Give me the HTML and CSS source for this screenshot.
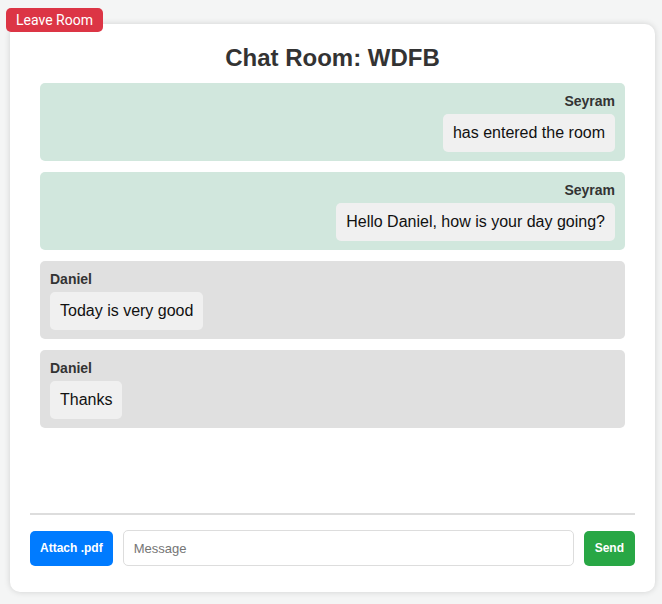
FILE: index.html
```html
<!DOCTYPE html>
<html>
<head>
<meta charset="utf-8">
<link rel="stylesheet" href="styles.css">
</head>
<body>
<button class="leave">Leave Room</button>
<div class="card">
  <h2 class="title">Chat Room: WDFB</h2>
  <div class="messages">
    <div class="msg mine">
      <div class="name">Seyram</div>
      <div class="bubble">has entered the room</div>
    </div>
    <div class="msg mine">
      <div class="name">Seyram</div>
      <div class="bubble">Hello Daniel, how is your day going?</div>
    </div>
    <div class="msg other">
      <div class="name">Daniel</div>
      <div class="bubble">Today is very good</div>
    </div>
    <div class="msg other">
      <div class="name">Daniel</div>
      <div class="bubble">Thanks</div>
    </div>
  </div>
  <form class="composer">
    <button type="button" class="btn attach">Attach .pdf</button>
    <input class="input" type="text" placeholder="Message">
    <button type="button" class="btn send">Send</button>
  </form>
</div>
</body>
</html>
```
FILE: styles.css
```css
* { box-sizing: border-box; }
html, body { margin: 0; padding: 0; }
body {
  background: #f4f5f5;
  font-family: "Liberation Sans", Arial, sans-serif;
  padding: 24px 7px 12px 10px;
  min-height: 604px;
}
.leave {
  position: absolute;
  top: 8px;
  left: 6px;
  height: 24px;
  padding: 0 10px;
  background: #dc3545;
  color: #fff;
  border: none;
  border-radius: 5px;
  font-family: Roboto, sans-serif;
  font-size: 14px;
  font-weight: 400;
}
.card {
  background: #fff;
  border-radius: 10px;
  box-shadow: 0 0 6px rgba(0,0,0,0.15);
  padding: 20px 20px 20px 20px;
  height: 568px;
  display: flex;
  flex-direction: column;
}
.title {
  margin: 0 0 11px;
  font-size: 24px;
  line-height: 28px;
  text-align: center;
  color: #333;
  font-weight: bold;
}
.messages {
  height: 420px;
  margin: 0 0 10px;
  padding: 0 10px;
  display: flex;
  flex-direction: column;
  gap: 11px;
}
.msg {
  border-radius: 5px;
  padding: 10px 10px 10px;
  display: flex;
  flex-direction: column;
  height: 78px;
}
.msg.mine { background: #d1e7dd; align-items: flex-end; }
.msg.other { background: #e0e0e0; align-items: flex-start; }
.name {
  font-size: 14px;
  line-height: 16px;
  font-weight: bold;
  color: #333;
  margin: 0 0 5px;
}
.bubble {
  background: #f0f0f0;
  border-radius: 5px;
  padding: 10px;
  font-size: 16px;
  line-height: 18px;
  color: #111;
}
.composer {
  border-top: 2px solid #ddd;
  padding-top: 15px;
  display: flex;
  align-items: center;
  gap: 10px;
  margin: 0;
}
.btn {
  height: 35px;
  border: none;
  border-radius: 5px;
  color: #fff;
  font-family: "Liberation Sans", Arial, sans-serif;
  font-weight: bold;
  font-size: 12px;
  padding: 0 10px;
}
.attach { background: #007bff; }
.send { background: #28a745; padding: 0 11px; }
.input {
  flex: 1;
  height: 36px;
  border: 1px solid #ddd;
  border-radius: 5px;
  padding: 0 10px;
  font-family: "Liberation Sans", Arial, sans-serif;
  font-size: 13px;
  color: #333;
}
.input::placeholder { color: #757575; }
```
